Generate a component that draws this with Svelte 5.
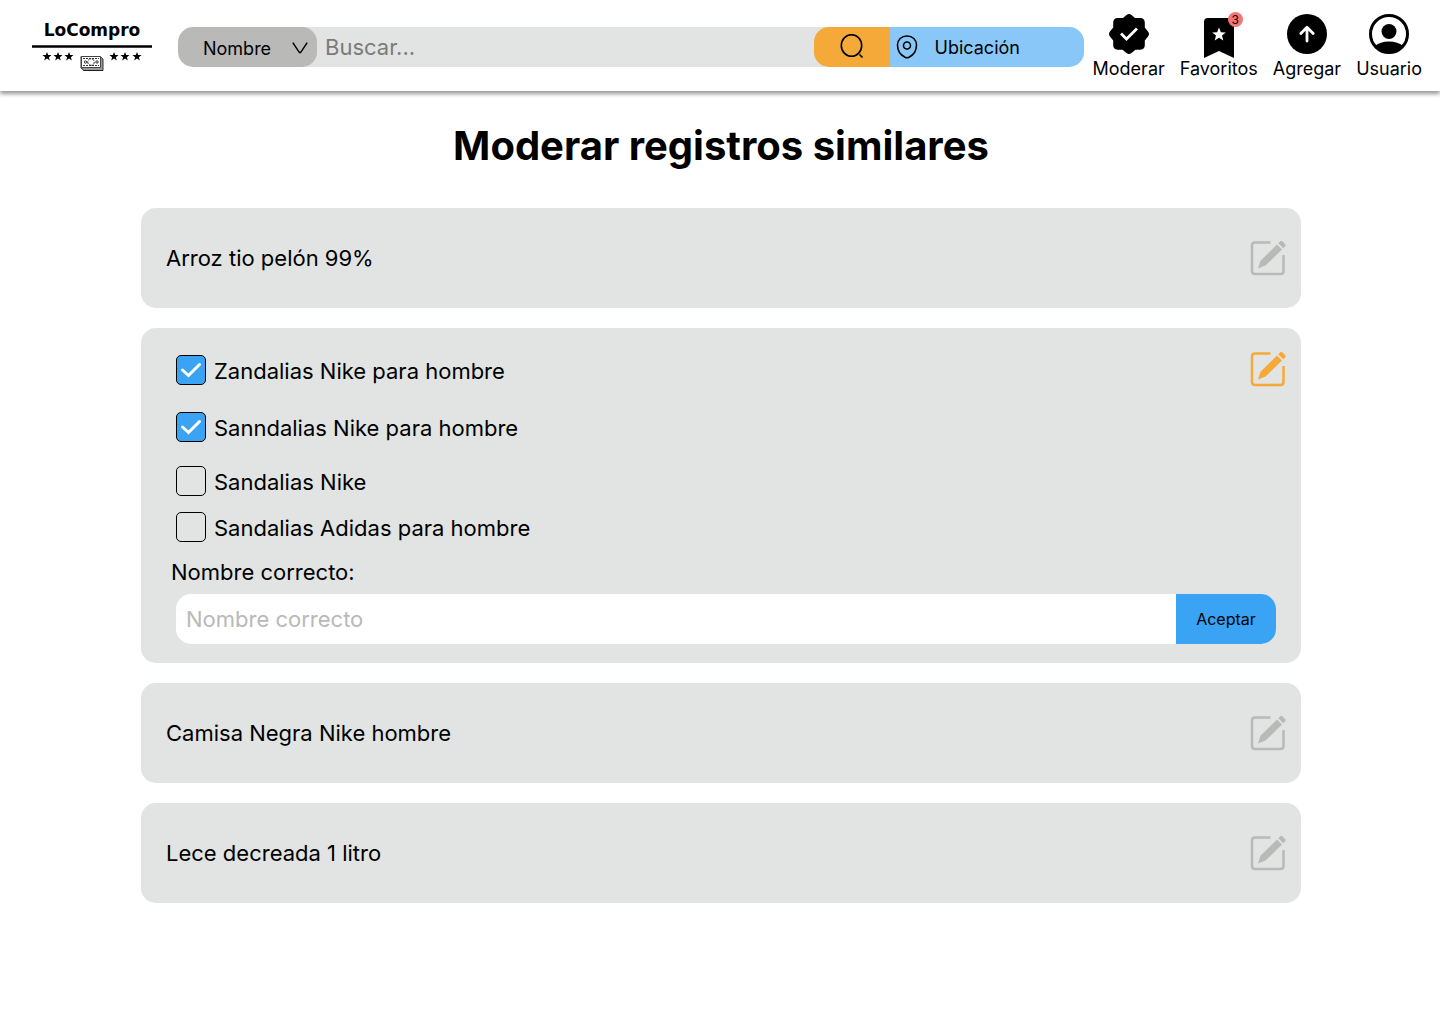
<script>
  const records = [
    { name: 'Arroz tio pelón 99%' },
    {
      name: 'Sandalias Nike',
      open: true,
      variants: [
        { id: 'v1', label: 'Zandalias Nike para hombre', checked: true },
        { id: 'v2', label: 'Sanndalias Nike para hombre', checked: true },
        { id: 'v3', label: 'Sandalias Nike', checked: false },
        { id: 'v4', label: 'Sandalias Adidas para hombre', checked: false }
      ]
    },
    { name: 'Camisa Negra Nike hombre' },
    { name: 'Lece decreada 1 litro' }
  ];
  const starX = [15, 26, 37, 82, 93, 105];
</script>

{#snippet editIcon()}
  <svg width="36" height="36" viewBox="0 0 36 36" aria-hidden="true">
    <path d="M20.500 2.500H5Q2 2.500 2 5.500V31Q2 34 5 34H30.500Q33.500 34 33.500 31V15" fill="none" stroke="currentColor" stroke-width="2.500" />
    <path d="M8 28.500L10.500 20.800L27 4.500L32 9.500L15.500 25.500ZM28.300 3.200L30.300 1.200Q31.300 .3 32.300 1.200L35.300 4.200Q36 5.200 35.300 6.200L33.200 8.300Z" fill="currentColor" />
  </svg>
{/snippet}

<header>
  <a class="logo" href="#inicio" aria-label="LoCompro">
    <span>LoCompro</span>
    <svg width="120" height="28" viewBox="0 0 120 28" aria-hidden="true">
      <path d="M0 1.500H120" stroke="#000" stroke-width="2.500" />
      {#each starX as x}
        <path transform="translate({x} 11.500)" d="M0-4.500L1.200-1.400H4.500L1.900.8L2.800 4L0 2.100L-2.800 4L-1.900.8L-4.500-1.400H-1.200Z" />
      {/each}
      <path d="M49 11.500H68L71 14V25.500H52L49 23Z" fill="#999" stroke="#333" />
      <path d="M49.500 11.500H68.500V22.500H49.500Z" fill="#fff" stroke="#444" />
      <path d="M51.500 25.500H71" fill="none" stroke="#222" />
      <path d="M51 13.500H67M51 20.500H67" stroke="#333" stroke-dasharray="2 1" />
      <circle cx="59" cy="17" r="3.300" fill="#fff" stroke="#333" stroke-dasharray="3 1" />
      <circle cx="53.500" cy="17" r="1.200" fill="none" stroke="#333" />
      <circle cx="65" cy="17" r="1.200" fill="none" stroke="#333" />
    </svg>
  </a>

  <form class="search" onsubmit={(e) => e.preventDefault()}>
    <div class="pick">
      <select aria-label="Buscar por"><option>Nombre</option></select>
      <svg width="16" height="12" viewBox="0 0 16 12" aria-hidden="true"><path d="M.8 .7L7.300 10.300Q8 11.200 8.700 10.300L15.200 .7" fill="none" stroke="#000" stroke-width="1.500" /></svg>
    </div>
    <input type="text" placeholder="Buscar..." aria-label="Buscar" />
    <button class="go" aria-label="Buscar">
      <svg width="24" height="26" viewBox="0 0 24 26" aria-hidden="true"><ellipse cx="11.500" cy="11.500" rx="10.200" ry="10.800" fill="none" stroke="#000" stroke-width="1.600" /><path d="M19.500 20.500L22.500 23.500" stroke="#000" stroke-width="1.600" /></svg>
    </button>
    <button class="place" type="button">
      <svg width="22" height="24" viewBox="0 0 22 24" aria-hidden="true"><path d="M1.500 10C1.500 4.700 5.500 1 11 1S20.500 4.700 20.500 10C20.500 15.500 17.300 20 13 22.300Q11 23.300 9 22.300C4.700 20 1.500 15.500 1.500 10Z" fill="none" stroke="#000" stroke-width="1.600" /><circle cx="11" cy="10.500" r="3.500" fill="none" stroke="#000" stroke-width="1.600" /></svg>
      Ubicación
    </button>
  </form>

  <nav>
    <a href="#moderar">
      <svg width="40" height="40" viewBox="0 0 40 40" aria-hidden="true">
        <path d="M17.500 1Q20-1 22.500 1L26 4H31.500Q35.500 4 35.800 8.500V13.500L39 17.500Q41 20 39 22.500L35.800 26.500V31.500Q35.500 35.500 31.500 35.700H26.500L22.500 39Q20 41 17.500 39L13.500 35.700H8.500Q4.500 35.500 4.200 31.500V26.500L1 22.500Q-1 20 1 17.500L4.200 13.500V8.500Q4.500 4 8.500 4H14Z" />
        <path d="M13 20.500L17.500 25L27 15.500" fill="none" stroke="#fff" stroke-width="2.800" stroke-linecap="square" />
      </svg>
      Moderar
    </a>
    <a href="#favoritos">
      <svg width="40" height="40" viewBox="0 0 40 40" overflow="visible" aria-hidden="true">
        <path d="M5 8Q5 4 9 4H31Q35 4 35 8V44L20 37L5 44Z" />
        <path d="M20 13.500L21.900 18.200L26.800 18.500L23 21.600L24.300 26.400L20 23.700L15.700 26.400L17 21.600L13.200 18.500L18.100 18.200Z" fill="#fff" />
      </svg>
      <span class="badge">3</span>
      Favoritos
    </a>
    <a href="#agregar">
      <svg width="40" height="40" viewBox="0 0 40 40" aria-hidden="true">
        <circle cx="20" cy="20" r="20" />
        <path d="M20 27V13.500M13.800 19.500L20 13.200L26.200 19.500" fill="none" stroke="#fff" stroke-width="2.800" stroke-linecap="round" stroke-linejoin="round" />
      </svg>
      Agregar
    </a>
    <a href="#usuario">
      <svg width="40" height="40" viewBox="0 0 40 40" aria-hidden="true">
        <circle cx="20" cy="20" r="18.500" fill="#fff" stroke="#000" stroke-width="3" />
        <circle cx="20" cy="17.500" r="7.500" />
        <path d="M6 32Q11 27.500 20 27.500T34 32Q29 39 20 39T6 32Z" />
      </svg>
      Usuario
    </a>
  </nav>
</header>

<main>
  <h1>Moderar registros similares</h1>
  {#each records as record}
    {#if record.open}
      <section class="card open">
        <form onsubmit={(e) => e.preventDefault()}>
          <ul>
            {#each record.variants as v}
              <li>
                <span class="tick">
                  <input type="checkbox" id={v.id} checked={v.checked} />
                  <svg width="22" height="16" viewBox="0 0 22 16" aria-hidden="true"><path d="M2.500 8L8.500 13.500L19.500 2.500" fill="none" stroke="#fff" stroke-width="3" stroke-linecap="round" /></svg>
                </span>
                <label for={v.id}>{v.label}</label>
              </li>
            {/each}
          </ul>
          <label class="caption" for="correcto">Nombre correcto:</label>
          <div class="entry">
            <input id="correcto" type="text" placeholder="Nombre correcto" />
            <button>Aceptar</button>
          </div>
        </form>
        <button class="edit active" aria-label="Cerrar edición">{@render editIcon()}</button>
      </section>
    {:else}
      <section class="card">
        <span>{record.name}</span>
        <button class="edit" aria-label="Editar">{@render editIcon()}</button>
      </section>
    {/if}
  {/each}
</main>

<style>
  :global(body) { background: #fff; font-family: Inter, sans-serif; color: #000; }
  button, input, select { font: inherit; color: inherit; border: 0; margin: 0; padding: 0; background: none; border-radius: 0; outline: 0; }
  button { cursor: pointer; }
  a { color: inherit; text-decoration: none; }
  svg { display: block; flex: none; }

  header { display: flex; align-items: flex-start; height: 91px; padding: 0 18px 0 32px; box-sizing: border-box; background: #fff; box-shadow: 0 3px 4px rgba(0, 0, 0, .4); }
  .logo { display: flex; flex-direction: column; align-items: center; width: 120px; margin-top: 20px; font: bold 17px/20px "DejaVu Sans", sans-serif; }
  .logo svg { margin-top: 5px; }

  .search { display: flex; flex: 1; min-width: 0; height: 40px; margin: 27px 9px 0 26px; border-radius: 15px; background: #e1e4e2; overflow: hidden; }
  .pick { display: grid; align-items: center; width: 139px; }
  .pick select { grid-area: 1 / 1; height: 40px; padding: 2px 25px 0; border-radius: 15px; background: #b9b9b8; font-size: 18px; appearance: none; }
  .pick svg { grid-area: 1 / 1; justify-self: end; margin: 2px 9px 0 0; pointer-events: none; }
  .search input { flex: 1; min-width: 0; padding: 0 8px; font-size: 22px; }
  .search input::placeholder { color: #7b7b7b; opacity: 1; }
  .go { display: flex; align-items: center; justify-content: center; width: 76px; border-radius: 15px 0 0 15px; background: #f4a938; }
  .place { display: flex; align-items: center; gap: 17px; width: 194px; padding: 0 6px; background: #89c7f8; font-size: 18px; }

  nav { display: flex; gap: 15px; padding-top: 14px; }
  nav a { position: relative; display: flex; flex-direction: column; align-items: center; gap: 4px; font-size: 18px; line-height: 22px; }
  .badge { position: absolute; top: -2px; right: 15px; width: 15px; height: 15px; border-radius: 50%; background: #f57577; font-size: 12px; line-height: 15px; text-align: center; }

  main { display: flex; flex-direction: column; gap: 20px; padding: 30px 139px 30px 141px; font-size: 22px; line-height: 28px; }
  h1 { margin: 0 0 17px; font-size: 40px; line-height: 50px; text-align: center; }
  .card { display: flex; align-items: center; justify-content: space-between; min-height: 100px; padding: 0 15px 0 25px; box-sizing: border-box; border-radius: 15px; background: #e1e4e2; }
  .edit { color: #b9b9b8; }
  .edit.active { color: #f4a938; }
  .open { position: relative; align-items: flex-start; padding: 27px 25px 19px 30px; }
  .open .edit { position: absolute; top: 23px; right: 15px; }
  .open form { flex: 1; display: flex; flex-direction: column; }
  ul { margin: 0; padding: 0 0 0 5px; list-style: none; }
  li { display: flex; align-items: center; gap: 8px; height: 30px; margin-bottom: 16px; }
  li label { padding-top: 2px; }
  li:nth-child(1) { margin-bottom: 27px; }
  li:nth-child(2) { margin-bottom: 24px; }
  .tick { display: grid; place-items: center; }
  .tick input { grid-area: 1 / 1; width: 30px; height: 30px; border: 1px solid #000; border-radius: 5px; appearance: none; }
  .tick input:checked { background: #3aa3f4; }
  .tick svg { grid-area: 1 / 1; visibility: hidden; pointer-events: none; }
  .tick input:checked + svg { visibility: visible; }
  .caption { align-self: flex-start; margin-bottom: 8px; }
  .entry { display: flex; height: 50px; margin-left: 5px; border-radius: 15px; background: #fff; overflow: hidden; }
  .entry input { flex: 1; min-width: 0; padding: 0 10px; }
  .entry input::placeholder { color: #b9b9b8; opacity: 1; }
  .entry button { width: 100px; background: #3aa3f4; font-size: 16px; }
</style>
